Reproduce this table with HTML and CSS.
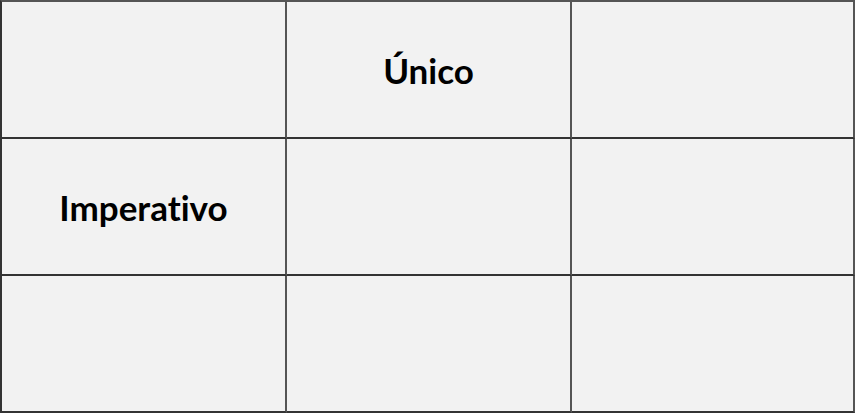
FILE: index.html
```html
<!DOCTYPE html>
<html>
<head>
<meta charset="utf-8">
<link rel="stylesheet" href="styles.css">
</head>
<body>
<div class="grid">
  <div class="cell"></div>
  <div class="cell">Único</div>
  <div class="cell"></div>
  <div class="cell">Imperativo</div>
  <div class="cell"></div>
  <div class="cell"></div>
  <div class="cell"></div>
  <div class="cell"></div>
  <div class="cell"></div>
</div>
</body>
</html>
```
FILE: styles.css
```css
html, body {
  margin: 0;
  padding: 0;
  background: #ffffff;
}
.grid {
  display: grid;
  width: max-content;
  grid-template-columns: 285px 285px 283px;
  grid-template-rows: 137px 137px 137px;
  background: #f2f2f2;
  border-top: 2px solid #555;
  border-left: 2px solid #333;
}
.cell {
  box-sizing: border-box;
  border-right: 2px solid #555;
  border-bottom: 2px solid #333;
  display: flex;
  align-items: center;
  justify-content: center;
  font-family: Lato, "Open Sans", sans-serif;
  font-weight: 700;
  font-size: 35px;
  font-variant-ligatures: none;
  font-feature-settings: "liga" 0;
  color: #000;
}
```
